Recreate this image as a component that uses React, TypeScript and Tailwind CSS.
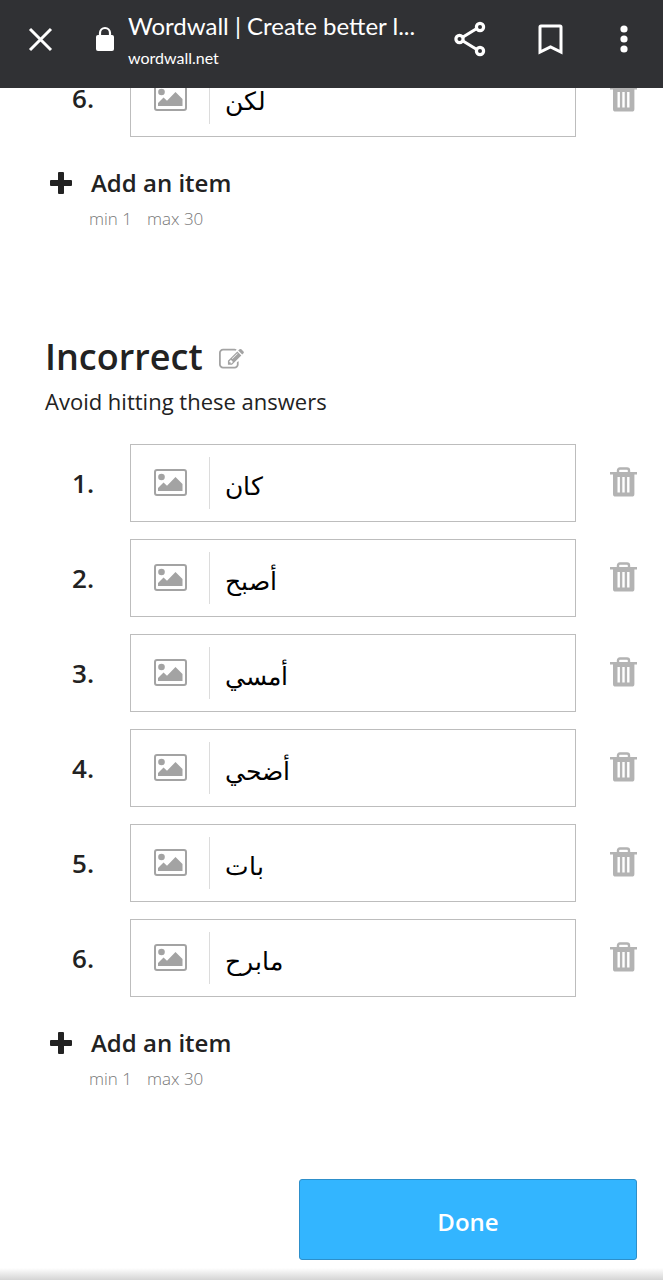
import { useState } from 'react';

const CORRECT_ITEMS = ['لكن'];
const INCORRECT_ITEMS = ['كان', 'أصبح', 'أمسي', 'أضحي', 'بات', 'مابرح'];

function PictureIcon() {
  return (
    <svg width="33" height="27" viewBox="0 0 33 27" aria-hidden="true">
      <rect x="1" y="1" width="31" height="25" rx="2" fill="none" stroke="#a3a3a3" strokeWidth="2" />
      <circle cx="7.5" cy="8" r="3.3" fill="#a3a3a3" />
      <path d="M4 22v-3l5.5-5.5 3.5 3.2L21.5 8l7 7V22z" fill="#a3a3a3" />
    </svg>
  );
}

function TrashIcon() {
  return (
    <svg width="27" height="30" viewBox="0 0 27 30" aria-hidden="true">
      <path d="M8 6V3.5Q8 1.5 10 1.5h7q2 0 2 2V6" fill="none" stroke="#b3b3b3" strokeWidth="2.4" />
      <path d="M0 5h27v2.6h-2.6V27q0 2.6-2.6 2.6H5.6Q3 29.6 3 27V7.6H0z" fill="#b3b3b3" />
      <path d="M8.7 10v15.5M13.5 10v15.5M18.3 10v15.5" stroke="#fff" strokeWidth="2.4" />
    </svg>
  );
}

function EditIcon() {
  return (
    <svg width="25" height="25" viewBox="0 0 1792 1792" fill="#a3a3a3" aria-hidden="true">
      <path d="M888 1184l116-116-152-152-116 116v56h96v96h56zm440-720q-16-16-33 1l-350 350q-17 17-1 33t33-1l350-350q17-17 1-33zm80 594v190q0 119-84.5 203.5t-203.5 84.5h-832q-119 0-203.5-84.5t-84.5-203.5v-832q0-119 84.5-203.5t203.5-84.5h832q63 0 117 25 15 7 18 23 3 17-9 29l-49 49q-14 14-32 8-23-6-45-6h-832q-66 0-113 47t-47 113v832q0 66 47 113t113 47h832q66 0 113-47t47-113v-126q0-13 9-22l64-64q15-15 35-7t20 29zm-96-738l288 288-672 672h-288v-288zm444 132l-92 92-288-288 92-92q28-28 68-28t68 28l152 152q28 28 28 68t-28 68z" />
    </svg>
  );
}

function BrowserBar() {
  return (
    <header className="sticky top-0 z-10 flex h-[88px] items-center bg-[#303134] pr-[31px] pb-[10px] pl-7 font-['Lato',sans-serif] text-white">
      <button type="button" aria-label="Close">
        <svg width="25" height="25" viewBox="0 0 25 25" aria-hidden="true">
          <path d="M2 2l21 21M23 2L2 23" stroke="#fff" strokeWidth="3" />
        </svg>
      </button>
      <svg width="20" height="26" viewBox="0 0 20 26" className="ml-[42px] shrink-0" aria-hidden="true">
        <rect x="1" y="9" width="18" height="16" rx="2" fill="#fff" />
        <path d="M5 10V7a5 5 0 0 1 10 0v3" fill="none" stroke="#fff" strokeWidth="2.2" />
      </svg>
      <div className="ml-[13px] min-w-0 flex-1 pt-[6px]">
        <div className="truncate text-[24px] leading-8">Wordwall | Create better l...</div>
        <div className="text-[16px] leading-8">wordwall.net</div>
      </div>
      <div className="flex shrink-0 items-center">
        <button type="button" aria-label="Share">
          <svg width="32" height="36" viewBox="0 0 32 36" fill="none" stroke="#fff" strokeWidth="3.2" aria-hidden="true">
            <path d="M9 16l13-8M9 20l13 8" />
            <circle cx="5.5" cy="18" r="3.6" />
            <circle cx="26" cy="6" r="3.6" />
            <circle cx="26" cy="30" r="3.6" />
          </svg>
        </button>
        <button type="button" aria-label="Bookmark" className="ml-[52px]">
          <svg width="25" height="32" viewBox="0 0 25 32" aria-hidden="true">
            <path d="M2 29V4q0-1 1-1h19q1 0 1 1v25l-10.5-5z" fill="none" stroke="#fff" strokeWidth="3" />
          </svg>
        </button>
        <button type="button" aria-label="More" className="ml-[53px]">
          <svg width="16" height="28" viewBox="0 0 16 28" fill="#fff" aria-hidden="true">
            <circle cx="8" cy="4" r="3.6" />
            <circle cx="8" cy="14" r="3.6" />
            <circle cx="8" cy="24" r="3.6" />
          </svg>
        </button>
      </div>
    </header>
  );
}

function ItemRow({ id, number, value, onChange }: { id: string; number: number; value: string; onChange: (value: string) => void }) {
  return (
    <li className="flex h-[78px] items-center pr-[26px] pl-[72px]">
      <label htmlFor={id} className="w-[58px] shrink-0 text-[26px] leading-8 font-semibold">
        {number}.
      </label>
      <div className="flex h-full min-w-0 flex-1 items-center border border-[#bdbdbd]">
        <button type="button" aria-label="Add image" className="mb-[2px] ml-[23px] shrink-0">
          <PictureIcon />
        </button>
        <div className="ml-[22px] h-[52px] border-l border-[#dcdcdc]"></div>
        <input
          id={id}
          value={value}
          onChange={(e) => onChange(e.target.value)}
          className="h-full min-w-0 flex-1 bg-transparent pt-1 pr-4 pl-[15px] font-['Noto_Sans',sans-serif] text-[25px] text-black outline-none"
        />
      </div>
      <button type="button" aria-label={`Delete item ${number}`} className="mb-[2px] ml-[34px] shrink-0">
        <TrashIcon />
      </button>
    </li>
  );
}

function ItemList({ name, start, initial }: { name: string; start: number; initial: string[] }) {
  const [items, setItems] = useState(initial);

  const handleChange = (index: number, value: string) => {
    setItems(items.map((item, i) => (i === index ? value : item)));
  };

  return (
    <>
      <ol className="flex flex-col gap-[17px]">
        {items.map((item, i) => (
          <ItemRow
            key={i}
            id={`${name}-${start + i}`}
            number={start + i}
            value={item}
            onChange={(value) => handleChange(i, value)}
          />
        ))}
      </ol>
      <button
        type="button"
        onClick={() => setItems([...items, ''])}
        className="mt-7 ml-[50px] flex h-9 items-center text-[24px] leading-9 font-semibold"
      >
        <svg width="22" height="22" viewBox="0 0 22 22" fill="#222" className="mr-[19px]" aria-hidden="true">
          <rect x="0" y="8" width="22" height="6" rx="1" />
          <rect x="8" y="0" width="6" height="22" rx="1" />
        </svg>
        Add an item
      </button>
      <p className="mt-[6px] ml-[89px] flex gap-[15px] text-[17px] leading-6 font-light text-[#777]">
        <span>min 1</span>
        <span>max 30</span>
      </p>
    </>
  );
}

export default function App() {
  return (
    <div className="min-h-screen bg-white font-['Open_Sans',sans-serif] text-[#222]">
      <BrowserBar />
      {/* the first list is scrolled partly under the bar */}
      <main className="-mt-[29px]">
        <section>
          <ItemList name="correct" start={6} initial={CORRECT_ITEMS} />
        </section>

        <section className="mt-[102px]">
          <div className="ml-[45px] flex items-center">
            <h2 className="text-[36px] leading-[48px] font-semibold">Incorrect</h2>
            <button type="button" aria-label="Edit title" className="ml-4 pt-1">
              <EditIcon />
            </button>
          </div>
          <p className="mt-1 mb-[27px] ml-[45px] text-[22px] leading-8">Avoid hitting these answers</p>
          <ItemList name="incorrect" start={1} initial={INCORRECT_ITEMS} />
        </section>

        <div className="mt-[88px] flex justify-end pr-[26px]">
          <button
            type="button"
            className="h-[81px] w-[338px] rounded-[3px] border border-[#2d8fca] bg-[#33b5ff] pt-1 text-[24px] font-semibold text-white"
          >
            Done
          </button>
        </div>
      </main>
      <div className="mt-2 h-3 bg-gradient-to-b from-white to-[#d4d4d4]"></div>
    </div>
  );
}
